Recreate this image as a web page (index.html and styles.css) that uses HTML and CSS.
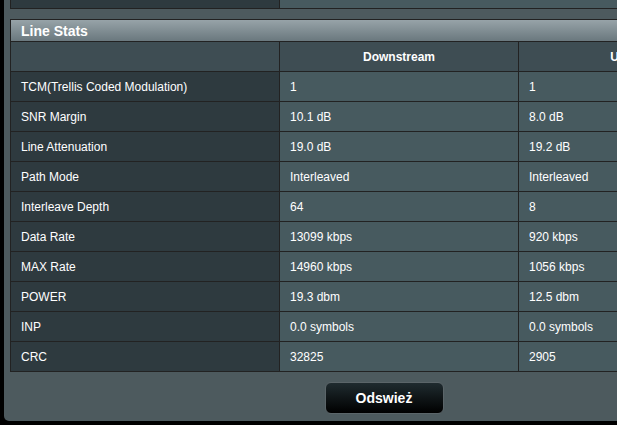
FILE: index.html
```html
<!DOCTYPE html>
<html lang="pl">
<head>
<meta charset="utf-8">
<title>Line Stats</title>
<link rel="stylesheet" href="styles.css">
</head>
<body>
<div class="panel">
  <div class="prev-table">
    <div class="prev-th"></div>
    <div class="prev-td"></div>
  </div>
  <div class="stats">
    <div class="title">Line Stats</div>
    <div class="hd"></div>
    <div class="hd">Downstream</div>
    <div class="hd">Upstream</div>

    <div class="th">TCM(Trellis Coded Modulation)</div><div class="td">1</div><div class="td">1</div>
    <div class="th">SNR Margin</div><div class="td">10.1 dB</div><div class="td">8.0 dB</div>
    <div class="th">Line Attenuation</div><div class="td">19.0 dB</div><div class="td">19.2 dB</div>
    <div class="th">Path Mode</div><div class="td">Interleaved</div><div class="td">Interleaved</div>
    <div class="th">Interleave Depth</div><div class="td">64</div><div class="td">8</div>
    <div class="th">Data Rate</div><div class="td">13099 kbps</div><div class="td">920 kbps</div>
    <div class="th">MAX Rate</div><div class="td">14960 kbps</div><div class="td">1056 kbps</div>
    <div class="th">POWER</div><div class="td">19.3 dbm</div><div class="td">12.5 dbm</div>
    <div class="th">INP</div><div class="td">0.0 symbols</div><div class="td">0.0 symbols</div>
    <div class="th">CRC</div><div class="td">32825</div><div class="td">2905</div>
  </div>
  <div class="actions">
    <button class="btn" type="button">Odswież</button>
  </div>
</div>
</body>
</html>
```
FILE: styles.css
```css
html, body {
  margin: 0;
  padding: 0;
  background: #000;
  overflow: hidden;
}
body {
  width: 617px;
  height: 425px;
  font-family: "Liberation Sans", Arial, sans-serif;
  font-size: 12px;
  color: #fff;
}
.panel {
  margin-left: 4px;
  width: 900px;
  height: 421px;
  box-sizing: border-box;
  padding-left: 6px;
  background: #4d5a5e;
  border-bottom-left-radius: 5px;
}
.prev-table {
  display: grid;
  grid-template-columns: 268px 478px;
  gap: 1px;
  width: 748px;
  box-sizing: border-box;
  padding: 0 1px 1px 1px;
  background: #222;
  height: 9px;
}
.prev-th { background: #2e3a3f; }
.prev-td { background: #475a5f; }
.stats {
  margin-top: 10px;
  display: grid;
  grid-template-columns: 268px 238px 238px;
  grid-auto-rows: 29px;
  gap: 1px;
  padding: 1px;
  width: 748px;
  box-sizing: border-box;
  background: #222;
}
.stats > div {
  display: flex;
  align-items: center;
  padding-left: 10px;
  white-space: nowrap;
  overflow: hidden;
}
.stats .title {
  grid-column: 1 / 4;
  height: 21px;
  align-self: start;
  font-size: 14px;
  font-weight: bold;
  background: linear-gradient(#97a3a8, #6a787e);
}
.stats .hd {
  background: #3e4d53;
  font-weight: bold;
  justify-content: center;
  padding-left: 0;
}
.stats .th { background: #2e3a3f; }
.stats .td { background: #475a5f; }
.stats > .title + .hd { }
.stats {
  grid-template-rows: 21px;
}
.actions {
  width: 748px;
  margin-top: 10px;
  display: flex;
  justify-content: center;
}
.btn {
  width: 119px;
  height: 32px;
  box-sizing: border-box;
  border: 1px solid #5b6569;
  border-radius: 6px;
  background: linear-gradient(#1f2b2f, #000);
  color: #fff;
  font-family: "Liberation Sans", Arial, sans-serif;
  font-size: 14px;
  font-weight: bold;
  padding: 0;
}
```
